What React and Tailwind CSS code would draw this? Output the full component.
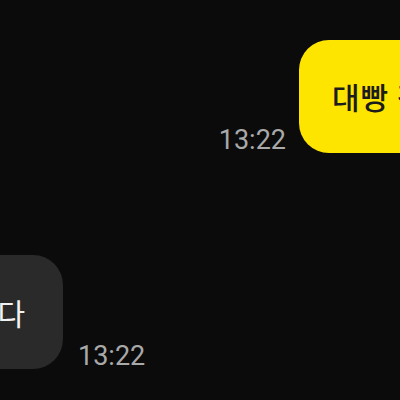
// Chat fragment: one sent (yellow) and one received (gray) bubble, both
// running off the edge of the frame like a cropped phone capture.

const KR = { fontFamily: '"Noto Sans CJK KR", "Noto Sans", sans-serif' }

const Time = ({ children }) => (
  <span
    style={{ fontFamily: 'Roboto, "Noto Sans", sans-serif' }}
    className="mb-[-1px] text-[27px] leading-none text-[#a9a9a9]"
  >
    {children}
  </span>
)

export default function App() {
  return (
    <div className="h-[400px] w-[400px] overflow-hidden bg-[#0b0b0b] pt-[40px]">
      {/* sent */}
      <div className="flex items-end justify-end gap-[13px]">
        <Time>13:22</Time>
        <div className="-mr-[121px] flex h-[113px] w-[222px] shrink-0 items-center rounded-[30px] bg-[#fee500] pl-[33px]">
          <span
            style={KR}
            className="whitespace-nowrap text-[30px] font-medium tracking-[1px] text-[#1c1c1c]"
          >
            대빵 감사
          </span>
        </div>
      </div>

      {/* received */}
      <div className="mt-[102px] flex items-end gap-[15px]">
        <div className="-ml-[157px] flex h-[114px] w-[220px] shrink-0 items-center justify-end rounded-[30px] bg-[#2a2a2a] pr-[37px]">
          <span
            style={KR}
            className="whitespace-nowrap text-[30px] tracking-[1px] text-[#f2f2f2]"
          >
            감사합니다
          </span>
        </div>
        <Time>13:22</Time>
      </div>
    </div>
  )
}
